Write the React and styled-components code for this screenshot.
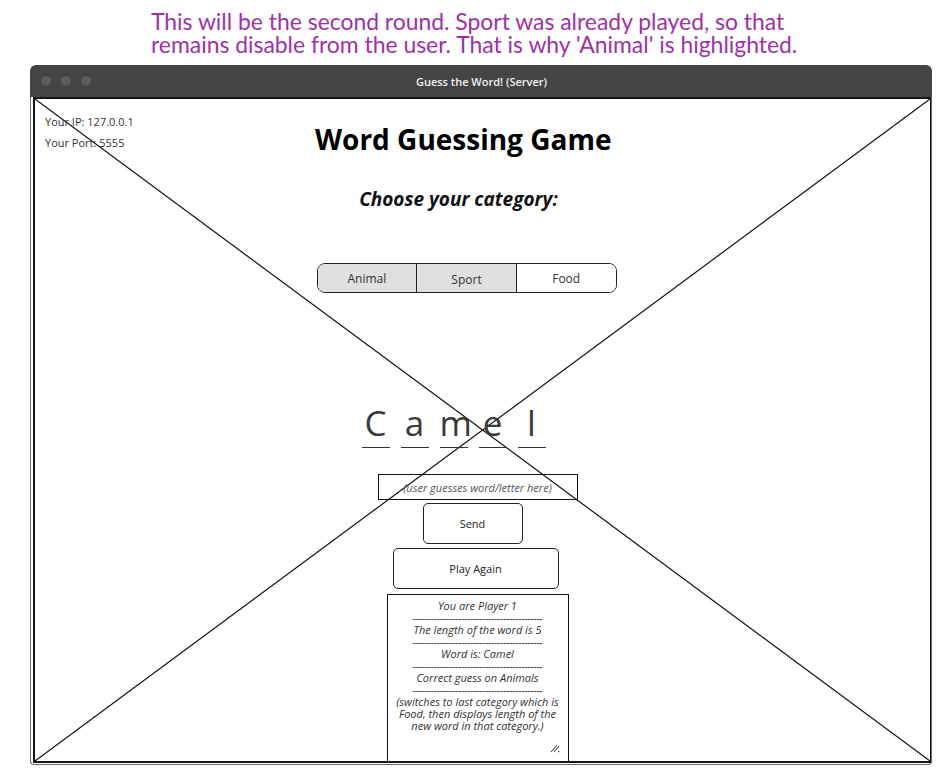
import React from 'react';
import styled, { createGlobalStyle } from 'styled-components';

const GlobalStyle = createGlobalStyle`
  html, body {
    margin: 0;
    padding: 0;
    background: #ffffff;
  }
  body {
    font-family: 'Open Sans', 'Noto Sans', sans-serif;
    color: #222;
  }
`;

const Page = styled.div`
  width: 951px;
  height: 783px;
  padding-top: 10px;
  box-sizing: border-box;
  overflow: hidden;
`;

const Note = styled.div`
  margin-left: 151px;
  font-family: 'Lato', 'Noto Sans', sans-serif;
  font-size: 22.9px;
  line-height: 23px;
  color: #9d31a8;
`;

const Window = styled.div`
  width: 902px;
  margin: 9px 0 0 30px;
`;

const TitleBar = styled.div`
  height: 32px;
  background: #444444;
  border-radius: 6px 6px 0 0;
  display: flex;
  align-items: center;
  padding: 0 10px;
`;

const Dots = styled.div`
  display: flex;
  gap: 10px;
  padding-left: 1px;
`;

const Dot = styled.span`
  width: 10px;
  height: 10px;
  border-radius: 50%;
  background: #5d5d5d;
`;

const Title = styled.div`
  flex: 1;
  text-align: center;
  margin-right: 50px;
  color: #f2f2f2;
  font-size: 11px;
  font-weight: 600;
`;

const Frame = styled.div`
  border: 1px solid #6a6a6a;
  border-top: none;
  border-radius: 0 0 4px 4px;
  padding: 0 0 1px 2px;
`;

const Canvas = styled.div`
  position: relative;
  height: 666px;
  box-sizing: border-box;
  border: 2px solid #151515;
  border-right-width: 1px;
`;

const Cross = styled.svg`
  position: absolute;
  inset: 0;
  width: 100%;
  height: 100%;
  z-index: 0;
`;

const Content = styled.div`
  position: relative;
  z-index: 1;
  height: 100%;
  display: flex;
  flex-direction: column;
  align-items: center;
`;

const Header = styled.div`
  align-self: stretch;
  display: grid;
  grid-template-columns: 280px auto 1fr;
  padding-top: 12px;
`;

const HostInfo = styled.div`
  padding-left: 10px;
  font-size: 11px;
  line-height: 21px;
  color: #333;
`;

const Heading = styled.h1`
  margin: 11px 0 0;
  font-size: 28px;
  line-height: 34px;
  font-weight: 700;
  color: #000;
`;

const Shifted = styled.div`
  margin-left: ${p => (p.$shift || 0) * 2}px;
`;

const Subheading = styled(Shifted)`
  margin-top: 31px;
  font-size: 19px;
  line-height: 24px;
  font-weight: 700;
  font-style: italic;
  color: #111;
`;

const Tabs = styled(Shifted)`
  margin-top: 52px;
  width: 300px;
  height: 30px;
  box-sizing: border-box;
  border: 1px solid #222;
  border-radius: 8px;
  overflow: hidden;
  display: flex;
  background: #fff;
`;

const Tab = styled.div`
  flex: 1;
  display: flex;
  align-items: center;
  justify-content: center;
  font-size: 12px;
  color: #333;
  padding-top: ${p => (p.$low ? 2 : 0)}px;
  background: ${p => (p.$disabled ? '#e0e0e0' : '#ffffff')};
  & + & {
    border-left: 1px solid #222;
  }
`;

const Word = styled(Shifted)`
  margin-top: 110px;
  display: flex;
  gap: 11px;
`;

const Letter = styled.div`
  width: 28px;
  text-align: center;
  font-size: 35px;
  line-height: 40px;
  padding-bottom: 4px;
  color: #3a3a3a;
  border-bottom: 1px solid #333;
`;

const GuessInput = styled(Shifted)`
  margin-top: 26px;
  width: 200px;
  height: 26px;
  box-sizing: border-box;
  border: 1px solid #111;
  display: flex;
  align-items: center;
  justify-content: center;
  font-size: 11px;
  font-style: italic;
  color: #555;
`;

const Button = styled(Shifted)`
  margin-top: ${p => p.$gap}px;
  width: ${p => p.$width}px;
  height: 41px;
  box-sizing: border-box;
  border: 1px solid #222;
  border-radius: 5px;
  display: flex;
  align-items: center;
  justify-content: center;
  font-size: 11px;
  color: #222;
  background: #fff;
`;

const InfoBox = styled(Shifted)`
  margin-top: 5px;
  flex: 1;
  width: 182px;
  box-sizing: border-box;
  border: 1px solid #111;
  border-bottom: none;
  padding: 5px 4px 0;
  display: flex;
  flex-direction: column;
  align-items: center;
  background: #fff;
  font-size: 11px;
  line-height: 12px;
  font-style: italic;
  color: #333;
  text-align: center;
`;

const InfoLine = styled.div`
  white-space: nowrap;
`;

const Divider = styled.div`
  white-space: nowrap;
  font-style: normal;
  font-size: 10px;
  letter-spacing: -0.2px;
  color: #222;
`;

const Grip = styled.svg`
  align-self: flex-end;
  margin: auto 4px 8px 0;
`;

const infoLines = [
  'You are Player 1',
  'The length of the word is 5',
  'Word is: Camel',
  'Correct guess on Animals',
];

const dashes = '-'.repeat(43);

export default function App() {
  return (
    <Page>
      <GlobalStyle />
      <Note>
        This will be the second round. Sport was already played, so that
        <br />
        remains disable from the user. That is why 'Animal' is highlighted.
      </Note>
      <Window>
        <TitleBar>
          <Dots>
            <Dot />
            <Dot />
            <Dot />
          </Dots>
          <Title>Guess the Word! (Server)</Title>
        </TitleBar>
        <Frame>
          <Canvas>
            <Cross viewBox="0 0 100 100" preserveAspectRatio="none">
              <line x1="0" y1="0" x2="100" y2="100" stroke="#111" strokeWidth="1.2" vectorEffect="non-scaling-stroke" />
              <line x1="100" y1="0" x2="0" y2="100" stroke="#111" strokeWidth="1.2" vectorEffect="non-scaling-stroke" />
            </Cross>
            <Content>
              <Header>
                <HostInfo>
                  <div>Your IP: 127.0.0.1</div>
                  <div>Your Port: 5555</div>
                </HostInfo>
                <Heading>Word Guessing Game</Heading>
              </Header>
              <Subheading $shift={-24}>Choose your category:</Subheading>
              <Tabs $shift={-16}>
                <Tab $disabled>Animal</Tab>
                <Tab $disabled $low>Sport</Tab>
                <Tab>Food</Tab>
              </Tabs>
              <Word $shift={-29}>
                {'Camel'.split('').map((ch, i) => (
                  <Letter key={i}>{ch}</Letter>
                ))}
              </Word>
              <GuessInput $shift={-5}>(user guesses word/letter here)</GuessInput>
              <Button $shift={-10} $width={100} $gap={3}>Send</Button>
              <Button $shift={-7} $width={166} $gap={4}>Play Again</Button>
              <InfoBox $shift={-5}>
                {infoLines.map(line => (
                  <React.Fragment key={line}>
                    <InfoLine>{line}</InfoLine>
                    <Divider>{dashes}</Divider>
                  </React.Fragment>
                ))}
                <InfoLine>(switches to last category which is</InfoLine>
                <InfoLine>Food, then displays length of the</InfoLine>
                <InfoLine>new word in that category.)</InfoLine>
                <Grip width="10" height="9" viewBox="0 0 10 9">
                  <line x1="1" y1="8" x2="7" y2="1" stroke="#333" strokeWidth="1" />
                  <line x1="4" y1="8" x2="9" y2="2" stroke="#333" strokeWidth="1" />
                  <rect x="8" y="7" width="1.2" height="1.2" fill="#333" />
                </Grip>
              </InfoBox>
            </Content>
          </Canvas>
        </Frame>
      </Window>
    </Page>
  );
}
